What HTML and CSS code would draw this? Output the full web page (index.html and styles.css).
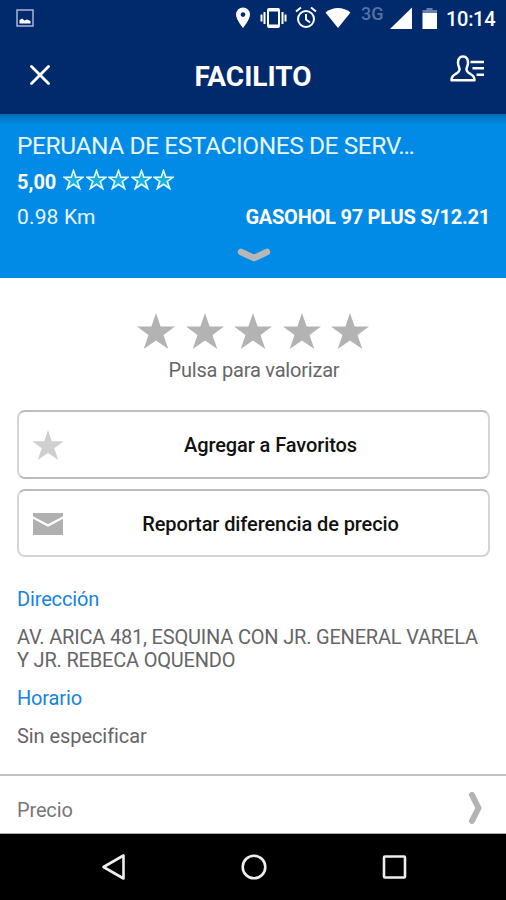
FILE: index.html
```html
<!DOCTYPE html>
<html lang="es">
<head>
<meta charset="utf-8">
<title>Facilito</title>
<link rel="stylesheet" href="styles.css">
</head>
<body>
<svg class="defs" width="0" height="0">
  <symbol id="star" viewBox="0 0 38 36" overflow="visible"><path d="M19 0l4.600 13.400H38L26.500 21.900l4.800 14.100L19 27.600 6.700 36l4.800-14.100L0 13.400h14.400z"/></symbol>
</svg>
<div class="status">
  <svg class="photo" width="18" height="18" viewBox="0 0 18 18"><rect x="1" y="1" width="16" height="16" fill="none" stroke="#aab4d6" stroke-width="1.500"/><path d="M3.500 14.500V11L6 9.500l2.500 2L11 10.500l3.500 1.500v2.500z" fill="#fff"/></svg>
  <div class="status-right">
    <svg width="16" height="36" viewBox="0 0 16 36"><path fill="#fff" fill-rule="evenodd" d="M8 7.500a7 7 0 0 0-7 7c0 5 7 13.500 7 13.500s7-8.500 7-13.500a7 7 0 0 0-7-7zm0 4.700a2.400 2.400 0 1 1 0 4.800 2.400 2.400 0 0 1 0-4.800z"/></svg>
    <svg class="vibrate" width="27" height="36" viewBox="0 0 27 36" fill="none" stroke="#fff" stroke-width="2"><rect x="8" y="9" width="11" height="18" rx="1"/><path d="M8 10.500h11M8 25.500h11M1.500 14.500v7M4.500 12v12M25.500 14.500v7M22.500 12v12"/></svg>
    <svg class="alarm" width="22" height="36" viewBox="0 0 22 36" fill="none" stroke="#fff" stroke-width="2"><circle cx="11" cy="19" r="8"/><path d="M11 14v5.500l4 3M1 11.500l5-4M21 11.500l-5-4"/></svg>
    <svg class="wifi" width="26" height="36" viewBox="0 0 26 36"><path fill="#fff" d="M.5 12.500C7.500 6.500 18.500 6.500 25.500 12.500L13 28z"/></svg>
    <span class="net">3G</span>
    <svg class="signal" width="22" height="36" viewBox="0 0 22 36"><path fill="#fff" d="M22 7.500V29H0z"/></svg>
    <svg class="battery" width="15" height="36" viewBox="0 0 15 36"><path fill="#697fb0" d="M4.500 8h6v2H15v3H.5v-3h4z"/><path fill="#fff" d="M.5 13H15v16H.5z"/></svg>
    <span class="time">10:14</span>
  </div>
</div>
<header class="header">
  <svg width="20" height="20" viewBox="0 0 20 20" fill="none" stroke="#fff" stroke-width="2.800" stroke-linecap="round"><path d="M1.500 1.500l17 17M18.500 1.500l-17 17"/></svg>
  <h1 class="brand">FACILITO</h1>
  <svg class="account" width="34" height="27" viewBox="0 0 34 27" fill="none" stroke="#fff" stroke-width="2.500" stroke-linejoin="round"><path d="M13 1.500c-3.700 0-5.200 3-5 6.500.1 2.500 1.200 4 1.500 6 .3 2.500-1.500 3.500-4 5C2.500 20.600 1.500 22 1.500 25.200h23c0-3.200-1-4.600-4-6.200-2.500-1.500-4.300-2.500-4-5 .3-2 1.400-3.500 1.500-6 .2-3.500-1.300-6.500-5-6.500z"/><path d="M20.500 7H34M22.500 13.300H34M26.500 19.700H34"/></svg>
</header>
<section class="station">
  <div class="name">PERUANA DE ESTACIONES DE SERV…</div>
  <div class="rating"><span class="score">5,00</span>
    <div class="mini-stars">
      <svg viewBox="-2 -2 42 40"><use href="#star" width="38" height="36"/></svg><svg viewBox="-2 -2 42 40"><use href="#star" width="38" height="36"/></svg><svg viewBox="-2 -2 42 40"><use href="#star" width="38" height="36"/></svg><svg viewBox="-2 -2 42 40"><use href="#star" width="38" height="36"/></svg><svg viewBox="-2 -2 42 40"><use href="#star" width="38" height="36"/></svg>
    </div>
  </div>
  <div class="facts"><span class="distance">0.98 Km</span><span class="price">GASOHOL 97 PLUS S/12.21</span></div>
  <svg class="expand" width="34" height="14" viewBox="0 0 34 14" fill="none" stroke="#b7b7b7" stroke-width="6.500" stroke-linecap="round" stroke-linejoin="round"><path d="M4 4l13 6L30 4"/></svg>
</section>
<main class="content">
  <div class="stars">
    <svg><use href="#star"/></svg><svg><use href="#star"/></svg><svg><use href="#star"/></svg><svg><use href="#star"/></svg><svg><use href="#star"/></svg>
  </div>
  <div class="hint">Pulsa para valorizar</div>
  <div class="actions">
    <button class="action"><svg class="icon" width="32" height="30"><use href="#star"/></svg><span>Agregar a Favoritos</span></button>
    <button class="action"><svg class="icon" width="32" height="22" viewBox="0 0 32 22"><path fill="#b0b0b0" d="M1 0h30v22H1z"/><path d="M0 4l16 8.500L32 4" fill="none" stroke="#fff" stroke-width="2.200"/></svg><span>Reportar diferencia de precio</span></button>
  </div>
  <div class="info">
    <h2>Dirección</h2>
    <p class="address">AV. ARICA 481, ESQUINA CON JR. GENERAL VARELA<br>Y JR. REBECA OQUENDO</p>
    <h2>Horario</h2>
    <p class="hours">Sin especificar</p>
  </div>
  <div class="row"><span>Precio</span>
    <svg width="14" height="34" viewBox="0 0 14 34" fill="none" stroke="#b3b3b3" stroke-width="6" stroke-linecap="round" stroke-linejoin="round"><path d="M4 4l6.500 13L4 30"/></svg>
  </div>
</main>
<nav class="nav">
  <svg width="26" height="28" viewBox="0 0 26 28"><path d="M2.500 14L22.500 2.500v23z"/></svg>
  <svg width="26" height="28" viewBox="0 0 26 28"><circle cx="13" cy="14" r="11.300"/></svg>
  <svg width="26" height="28" viewBox="0 0 26 28"><rect x="3" y="3.500" width="21" height="21" rx="1"/></svg>
</nav>
</body>
</html>
```

FILE: styles.css
```css
* { box-sizing: border-box; }
body { margin: 0; width: 506px; height: 900px; overflow: hidden; background: #fff; font-family: Roboto, "Liberation Sans", sans-serif; color: #666; display: flex; flex-direction: column; }
svg { display: block; flex: none; }
.defs { position: absolute; }
h1, h2, p { margin: 0; font-weight: 400; }
span { white-space: nowrap; }
.status { height: 36px; flex: none; background: #002a6c; display: flex; justify-content: space-between; padding: 0 10px 0 16px; color: #fff; }
.photo { margin-top: 9px; }
.status-right { display: flex; }
.vibrate { margin-left: 9px; }
.alarm { margin-left: 8px; }
.wifi { margin-left: 8px; }
.net { width: 24px; margin-left: 10px; font-size: 18px; line-height: 28px; font-weight: 500; color: #5671a3; }
.signal { margin-left: 5px; }
.battery { margin-left: 10px; }
.time { width: 50px; margin-left: 9px; font-size: 20px; line-height: 38px; font-weight: 500; letter-spacing: -.3px; }
.header { height: 78px; flex: none; background: #002a6c; display: flex; align-items: center; justify-content: space-between; padding: 0 22px 0 30px; }
.header > svg:first-child { margin-right: 6px; }
.brand { color: #fff; font-size: 28px; line-height: 33px; font-weight: 700; padding-top: 2px; }
.account { margin-top: -14px; }
.station { height: 164px; flex: none; color: #e9f5ff; background: linear-gradient(#0569ac 0, #0277c8 3px, #028be6 11px); padding: 16px 17px 0; display: flex; flex-direction: column; }
.name { height: 31px; font-size: 24.5px; line-height: 32px; letter-spacing: -.43px; white-space: nowrap; }
.rating { height: 40px; display: flex; align-items: center; font-size: 20px; font-weight: 700; color: #fff; }
.score { width: 46px; padding-top: 2px; }
.mini-stars { display: flex; gap: 1.5px; margin-top: -4px; }
.mini-stars svg { width: 21px; height: 21px; fill: #19b0e0; stroke: #e4ffff; stroke-width: 3.3; }
.facts { height: 32px; display: flex; justify-content: space-between; align-items: center; font-size: 21px; }
.distance { letter-spacing: .15px; }
.price { font-size: 20px; font-weight: 700; color: #fff; letter-spacing: -.24px; margin-right: -1px; }
.expand { align-self: center; margin: 15px -1px 0 0; }
.content { height: 556px; flex: none; display: flex; flex-direction: column; border-bottom: 1px solid #aaa; }
.stars { display: flex; justify-content: center; gap: 10.5px; padding-top: 35px; fill: #b3b3b3; }
.stars svg { width: 38px; height: 36px; }
.hint { text-align: center; font-size: 20px; line-height: 24px; margin-top: 9px; margin-right: -2px; letter-spacing: -.2px; }
.actions { display: flex; flex-direction: column; gap: 10px; padding: 28px 16px 0 17px; }
.action { height: 69px; display: flex; align-items: center; justify-content: center; position: relative; border: 2px solid #bdbdbd; border-left-color: #d5d5d5; border-right-color: #d5d5d5; border-radius: 8px; background: #fff; color: #111; font: 500 20px Roboto, sans-serif; letter-spacing: -.1px; padding: 1px 0 0 34px; }
.action + .action { height: 68px; border-bottom-color: #d5d5d5; padding-top: 2px; }
.icon { position: absolute; left: 13px; fill: #d0d0d0; }
.info { padding: 29px 17px 0; font-size: 20px; line-height: 23px; }
.info h2 { font-size: 20px; line-height: 26px; color: #1583e2; letter-spacing: -.15px; }
.info p { padding: 14px 0 13px; white-space: nowrap; }
.address { letter-spacing: -.19px; }
.hours { letter-spacing: -.07px; }
.row { margin-top: auto; height: 59px; border-top: 2px solid #c3c3c3; padding: 11px 24px 0 17px; display: flex; justify-content: space-between; align-items: center; font-size: 20px; letter-spacing: -.15px; color: #777; }
.row svg { margin-top: -5px; }
.nav { height: 66px; flex: none; background: #000; display: flex; justify-content: center; align-items: center; gap: 114px; padding-left: 1px; fill: none; stroke: #eee; stroke-width: 2.6; stroke-linejoin: round; }
```
